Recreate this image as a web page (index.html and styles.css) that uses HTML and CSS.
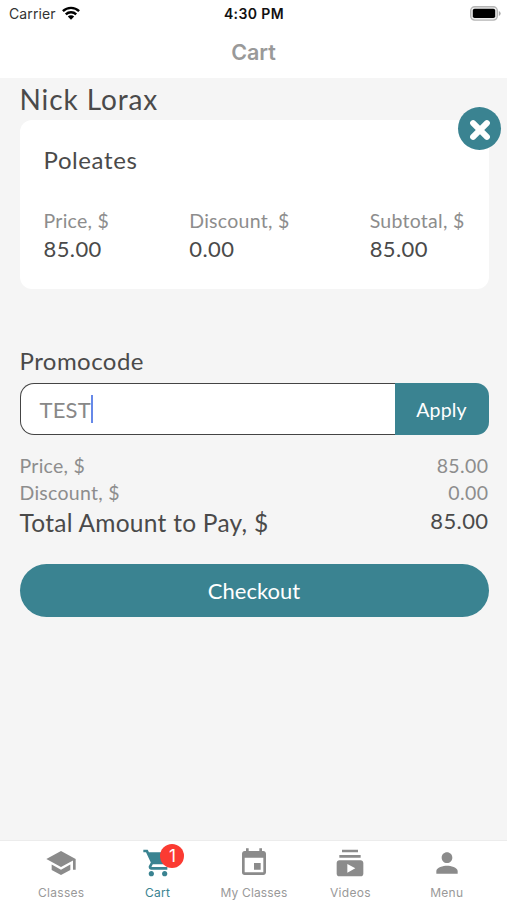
FILE: index.html
```html
<!DOCTYPE html>
<html lang="en">
<head>
<meta charset="utf-8">
<title>Cart</title>
<link rel="stylesheet" href="styles.css">
</head>
<body>
<header>
  <div class="status">
    <div class="carrier"><span>Carrier</span>
      <svg class="wifi" viewBox="0 0 18 14"><g fill="none" stroke="#000" stroke-width="2.4"><path d="M.9 5.2a11.6 11.6 0 0 1 16.2 0"/><path d="M3.8 8.4a7.4 7.4 0 0 1 10.4 0"/></g><path d="M9 13.8 5.8 10.6a4.5 4.5 0 0 1 6.4 0Z"/></svg>
    </div>
    <span class="time">4:30 PM</span>
    <svg class="battery" viewBox="0 0 31 15"><rect x=".7" y=".7" width="26.6" height="13.4" rx="4" fill="#eee" stroke="#b5b5b5" stroke-width="1.4"/><rect x="2.8" y="2.8" width="22.4" height="9.2" rx="1.8"/><path d="M28.8 5a2.6 2.6 0 0 1 0 5Z" fill="#aaa"/></svg>
  </div>
  <h1><span>Cart</span></h1>
</header>
<main>
  <h2><span class="name">Nick Lorax</span></h2>
  <section class="card">
    <button class="remove" aria-label="Remove"><svg viewBox="0 0 22 22"><path d="m4.1 4.1 13.8 13.8m0-13.8L4.1 17.9" stroke="#fff" stroke-width="6" stroke-linecap="round"/></svg></button>
    <h3><span class="item">Poleates</span></h3>
    <div class="cols">
      <div><p class="label"><span class="price">Price, $</span></p><p class="value"><span class="num">85.00</span></p></div>
      <div><p class="label"><span class="discount">Discount, $</span></p><p class="value"><span class="num">0.00</span></p></div>
      <div><p class="label"><span class="subtotal">Subtotal, $</span></p><p class="value"><span class="num">85.00</span></p></div>
    </div>
  </section>
  <h3 class="promo-title"><span class="promo">Promocode</span></h3>
  <div class="field"><div class="input"><span class="code">TEST</span><i class="caret"></i></div><button class="apply"><span>Apply</span></button></div>
  <div class="totals">
    <div class="row"><span class="price">Price, $</span><span class="small-num">85.00</span></div>
    <div class="row"><span class="discount">Discount, $</span><span class="small-num">0.00</span></div>
    <div class="row total"><span class="total-label">Total Amount to Pay, $</span><span class="num">85.00</span></div>
  </div>
  <button class="checkout"><span>Checkout</span></button>
</main>
<nav>
  <a><svg viewBox="0 0 24 24"><path d="M5 13.18v4L12 21l7-3.82v-4L12 17l-7-3.82zM12 3 1 9l11 6 9-4.91V17h2V9L12 3z"/></svg><span>Classes</span></a>
  <a class="active"><svg viewBox="0 0 24 24"><path d="M7 18c-1.1 0-1.99.9-1.99 2S5.9 22 7 22s2-.9 2-2-.9-2-2-2zM1 2v2h2l3.6 7.59-1.35 2.45c-.16.28-.25.61-.25.96 0 1.1.9 2 2 2h12v-2H7.42c-.14 0-.25-.11-.25-.25l.03-.12.9-1.63h7.45c.75 0 1.41-.41 1.75-1.03l3.58-6.49A1 1 0 0 0 20 4H5.21l-.94-2H1zm16 16c-1.1 0-1.99.9-1.99 2s.89 2 1.99 2 2-.9 2-2-.9-2-2-2z"/></svg><b class="badge">1</b><span>Cart</span></a>
  <a><svg viewBox="0 0 24 24"><path d="M17 12h-5v5h5v-5zM16 1v2H8V1H6v2H5c-1.11 0-1.99.9-1.99 2L3 19a2 2 0 0 0 2 2h14c1.1 0 2-.9 2-2V5c0-1.1-.9-2-2-2h-1V1h-2zm3 18H5V8h14v11z"/></svg><span class="my">My Classes</span></a>
  <a><svg viewBox="0 0 24 24"><path d="M20 8H4V6h16v2zm-2-6H6v2h12V2zm4 10v8c0 1.1-.9 2-2 2H4c-1.1 0-2-.9-2-2v-8c0-1.1.9-2 2-2h16c1.1 0 2 .9 2 2zm-6 4-6-3.27v6.53L16 16z"/></svg><span>Videos</span></a>
  <a><svg viewBox="0 0 24 24"><path d="M12 12c2.21 0 4-1.79 4-4s-1.79-4-4-4-4 1.79-4 4 1.79 4 4 4zm0 2c-2.67 0-8 1.34-8 4v2h16v-2c0-2.66-5.33-4-8-4z"/></svg><span>Menu</span></a>
</nav>
</body>
</html>
```
FILE: styles.css
```css
* { box-sizing: border-box; margin: 0; padding: 0; }
body { width: 507px; height: 900px; overflow: hidden; display: flex; flex-direction: column; background: #f5f5f5; color: #4a4a4a; font-family: Lato, sans-serif; }
h1, h2, h3 { font-weight: 400; }
button { border: 0; font: inherit; background: #3a8391; color: #fff; }
span { white-space: nowrap; }
header { height: 78px; background: #fff; font-family: Inter, sans-serif; }
.status { height: 28px; display: grid; grid-template-columns: 1fr auto 1fr; align-items: center; padding: 0 6px 0 9px; color: #111; font-size: 14px; }
.status span { margin-top: -2px; }
.carrier { display: flex; align-items: center; gap: 6px; color: #333; }
.carrier span { letter-spacing: .1px; }
.wifi { width: 18px; height: 14px; margin-top: -3px; }
.time { font-weight: 600; letter-spacing: .4px; position: relative; left: -1px; }
.battery { width: 31px; height: 15px; justify-self: end; margin-top: -2px; }
h1 { height: 48px; line-height: 48px; text-align: center; font-size: 21.5px; font-weight: 600; color: #999; }
main { flex: 1; padding: 0 18.5px 0 19.5px; }
h2 { height: 42px; line-height: 42px; font-size: 28px; }
.name { letter-spacing: .9px; }
.card { position: relative; height: 169px; padding: 24px 24px 0; background: #fff; border-radius: 12px; }
.remove { position: absolute; top: -13px; right: -12.5px; width: 43px; height: 43px; border-radius: 50%; display: grid; place-items: center; }
.remove svg { width: 22px; height: 22px; margin-top: 2px; }
h3 { height: 32px; line-height: 32px; font-size: 24px; }
.item { letter-spacing: .6px; }
.promo { letter-spacing: .45px; }
.cols { display: flex; justify-content: space-between; margin-top: 31px; }
.label { height: 28px; line-height: 28px; font-size: 19.5px; color: #8d8d8d; }
.price, .discount, .subtotal, .total-label { letter-spacing: .27px; }
.value { height: 28px; line-height: 28px; font-size: 22px; }
.promo-title { margin-top: 56px; }
.field { display: flex; height: 52px; margin-top: 6px; }
.input { flex: 1; display: flex; align-items: center; padding-left: 19px; background: #fff; border: solid #444; border-width: 1.5px 0 1.5px 1.5px; border-radius: 14px 0 0 14px; color: #888; font-size: 22px; }
.code { letter-spacing: .2px; }
.caret { width: 2px; height: 28px; background: #6688e8; }
.apply { width: 94px; border-radius: 0 13px 13px 0; font-size: 19.5px; letter-spacing: .2px; }
.totals { margin-top: 17px; }
.row { height: 27px; display: flex; justify-content: space-between; align-items: center; font-size: 19.5px; color: #8d8d8d; }
.total { height: 32px; font-size: 24.5px; color: #4a4a4a; }
.num { font-size: 22px; letter-spacing: .4px; }
.small-num { letter-spacing: .4px; }
.total .num { margin-top: -3px; }
.checkout { display: block; width: 100%; height: 53px; margin-top: 26px; border-radius: 26.5px; font-size: 22px; }
nav { height: 60px; display: grid; grid-template-columns: repeat(5, 1fr); padding: 0 12px 0 13px; background: #fff; border-top: 1px solid #ececec; color: #8b8b8b; font: 12px/16px Inter, sans-serif; }
nav a { position: relative; display: flex; flex-direction: column; align-items: center; padding-top: 6px; letter-spacing: .3px; }
nav svg { width: 32px; height: 32px; fill: currentColor; }
nav span { margin-top: 6px; color: #999; }
.active, .active span { color: #3a8391; }
.my { letter-spacing: .15px; }
.badge { position: absolute; left: 51px; top: 3px; width: 24px; height: 24px; border-radius: 50%; background: #fb3b32; color: #fff; font: 17px/24px Inter, sans-serif; text-align: center; letter-spacing: 0; }
```
